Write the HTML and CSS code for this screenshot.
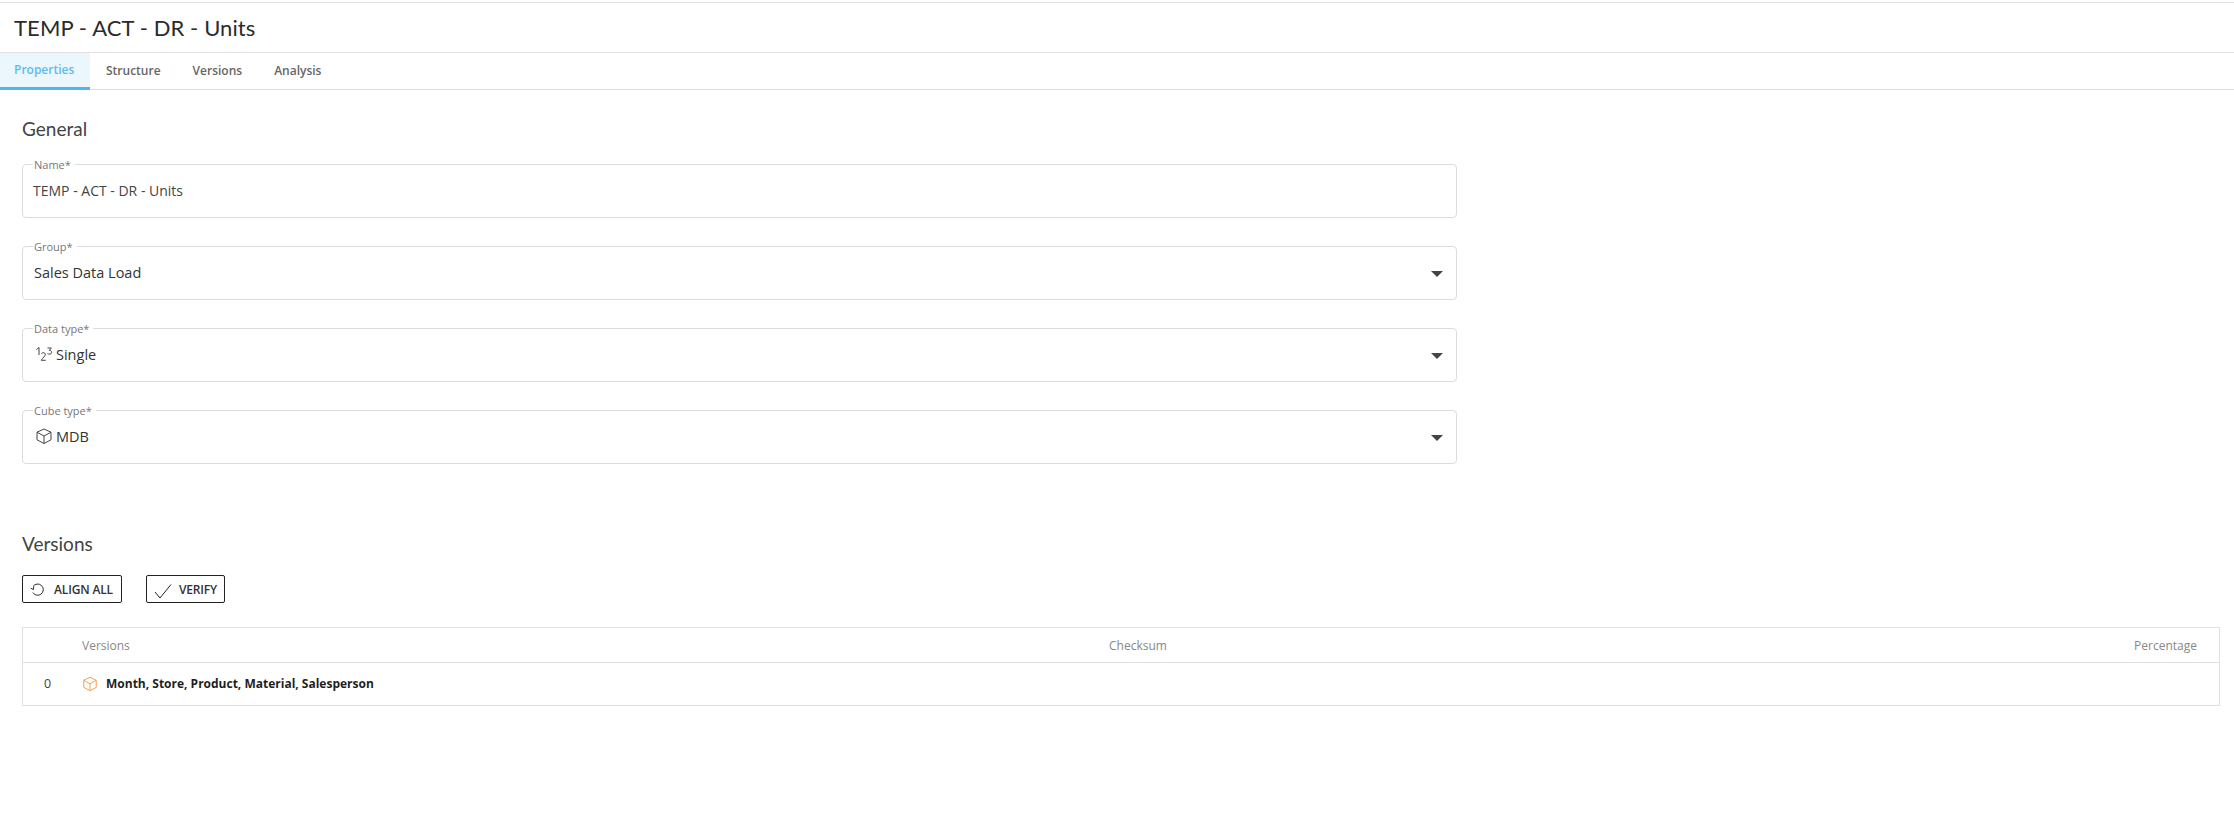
FILE: index.html
```html
<!DOCTYPE html>
<html lang="en">
<head>
<meta charset="utf-8">
<title>TEMP - ACT - DR - Units</title>
<link rel="stylesheet" href="styles.css">
</head>
<body>
<header class="title-bar"><h1 class="title">TEMP - ACT - DR - Units</h1></header>
<nav class="tabs">
  <a class="tab tab-active">Properties</a>
  <a class="tab">Structure</a>
  <a class="tab">Versions</a>
  <a class="tab">Analysis</a>
</nav>
<main class="content">
  <h2 class="section-title">General</h2>
  <div class="form">
    <fieldset class="field">
      <legend class="field-label">Name*</legend>
      <div class="field-value field-input">TEMP - ACT - DR - Units</div>
    </fieldset>
    <fieldset class="field">
      <legend class="field-label">Group*</legend>
      <div class="field-value">Sales Data Load</div>
      <span class="caret"></span>
    </fieldset>
    <fieldset class="field">
      <legend class="field-label">Data type*</legend>
      <div class="field-value">
        <svg class="field-icon" viewBox="0 0 18 18" fill="none" stroke="#444" stroke-width="1"><path d="M1.500 4.500 4 2.500V10"/><path d="M6.500 8.800c.3-1.600 3.800-1.600 3.800.5 0 1.700-2.900 3.800-4 6h4.400"/><path d="M12.500 3h3.800l-2 2.400c1.500-.2 2.400.7 2.400 1.900 0 1.900-2.900 2.500-4.200 1.100"/></svg>
        <span>Single</span>
      </div>
      <span class="caret"></span>
    </fieldset>
    <fieldset class="field">
      <legend class="field-label">Cube type*</legend>
      <div class="field-value">
        <svg class="field-icon" viewBox="0 0 18 18" fill="none" stroke="#444" stroke-width="1" stroke-linejoin="round"><path d="M9 2 16 5.200V12.800L9 16.500 2 12.800V5.200Z"/><path d="M2 5.200 9 9 16 5.200M9 9V16.500"/></svg>
        <span>MDB</span>
      </div>
      <span class="caret"></span>
    </fieldset>
  </div>

  <h2 class="section-title versions-title">Versions</h2>
  <div class="actions">
    <button class="btn" type="button">
      <svg class="btn-icon" viewBox="0 0 16 16" fill="none" stroke="#222" stroke-width="1"><path d="M3.200 4.800A6 6 0 1 1 3 11.200"/><path d="M.8 6.600 3.600 8 4 4.600"/></svg>
      ALIGN ALL
    </button>
    <button class="btn btn-verify" type="button">
      <svg class="btn-icon btn-icon-check" viewBox="0 0 18 16" fill="none" stroke="#222" stroke-width="1"><path d="M1 9 6 15 17 1.500"/></svg>
      VERIFY
    </button>
  </div>
  <div class="table">
    <div class="row row-head">
      <div class="cell-index"></div>
      <div class="cell-name">Versions</div>
      <div class="cell-check">Checksum</div>
      <div class="cell-pct">Percentage</div>
    </div>
    <div class="row row-body">
      <div class="cell-index">0</div>
      <div class="cell-name">
        <svg class="cube" viewBox="0 0 18 18" fill="none" stroke="#f0a050" stroke-width="1.100" stroke-linejoin="round"><path d="M9 1.500 16 4.800V12.800L9 16.500 2 12.800V4.800Z"/><path d="M2 4.800 9 8.800 16 4.800M9 8.800V16.500"/></svg>
        <strong class="version-name">Month, Store, Product, Material, Salesperson</strong>
      </div>
      <div class="cell-check"></div>
      <div class="cell-pct"></div>
    </div>
  </div>
</main>
</body>
</html>
```
FILE: styles.css
```css
* { box-sizing: border-box; }
html, body { margin: 0; background: #fff; }
body { font-family: "Open Sans", "Noto Sans", sans-serif; color: #333; height: 825px; overflow: hidden; }
.title-bar { height: 51px; margin-top: 2px; border-top: 1px solid #e2e2e2; border-bottom: 1px solid #e0e0e0; padding-left: 14px; display: flex; align-items: center; }
.title { margin: 0; font-family: Lato, "Open Sans", sans-serif; font-weight: 400; font-size: 22px; color: #2b2b2b; letter-spacing: .1px; }
.tabs { display: flex; height: 37px; border-bottom: 1px solid #e0e0e0; }
.tab { display: flex; align-items: center; padding: 0 16px 3px; font-size: 12px; font-weight: 600; color: #666; margin-bottom: -1px; }
.tab-active { width: 90px; padding: 0 0 1px 14px; background: #ecf6fd; color: #5dbcee; border-bottom: 3px solid #4db8ec; }
.content { padding: 0 14px 0 22px; }
.section-title { margin: 0; font-family: Lato, "Open Sans", sans-serif; font-weight: 400; font-size: 19px; color: #444; line-height: 24px; padding-top: 27px; }
.form { width: 1435px; margin-top: 17px; display: flex; flex-direction: column; gap: 22px; }
.field { position: relative; margin: 0; padding: 0 10px; height: 60px; border: 1px solid #dcdcdc; border-radius: 4px; min-width: 0; }
.field-label { padding: 0 4px 0 1px; font-size: 11px; line-height: 13px; color: #777; }
.field-value { display: flex; align-items: center; height: 38px; margin-top: 0; font-size: 14.500px; color: #333; gap: 3px; padding-left: 1px; }
.field-input { padding-left: 0; font-size: 14px; color: #444; }
.field-icon { width: 18px; height: 18px; margin-left: 1px; }
.caret { position: absolute; right: 13px; top: 18px; width: 0; height: 0; border-left: 6px solid transparent; border-right: 6px solid transparent; border-top: 6px solid #444; }
.versions-title { padding-top: 68px; }
.actions { display: flex; gap: 24px; margin-top: 19px; }
.btn { display: flex; align-items: center; height: 28px; padding: 0 8px 0 7px; gap: 9px; background: #fff; border: 1px solid #222; border-radius: 2px; font-family: "Open Sans", sans-serif; font-size: 12px; font-weight: 600; color: #333; letter-spacing: -.15px; }
.btn-verify { gap: 7px; padding-right: 7px; }
.btn-icon { width: 15px; height: 15px; }
.btn-icon-check { width: 18px; height: 16px; margin-top: 4px; }
.table { width: 2198px; margin-top: 24px; border: 1px solid #e0e0e0; }
.row { display: flex; align-items: center; }
.row-head { height: 35px; border-bottom: 1px solid #e0e0e0; color: #888; font-size: 12px; }
.row-body { height: 42px; padding-bottom: 1px; }
.cell-index { width: 59px; padding-left: 21px; font-size: 12.500px; color: #444; }
.cell-name { width: 1027px; display: flex; align-items: center; gap: 8px; }
.cell-check { flex: 1; }
.cell-pct { padding-right: 22px; }
.cube { width: 16px; height: 16px; }
.version-name { font-size: 12px; font-weight: 700; color: #1f1f1f; }
```
